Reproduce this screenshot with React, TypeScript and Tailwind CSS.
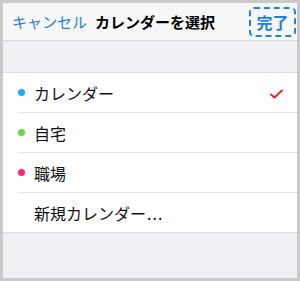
import React from "react";

type CalendarRow = {
  label: string;
  dot?: string;
  checked?: boolean;
};

const rows: CalendarRow[] = [
  { label: "カレンダー", dot: "bg-[#1badf8]", checked: true },
  { label: "自宅", dot: "bg-[#63da38]" },
  { label: "職場", dot: "bg-[#ff2968]" },
];

const font = { fontFamily: '"Noto Sans CJK JP", "Noto Sans", sans-serif' };

function Check() {
  return (
    <svg width="13" height="10" viewBox="0 0 13 10" className="mr-[14px] mt-[2px]">
      <path d="M1 5.5 L4.5 8.5 L12 1.5" fill="none" stroke="#ff1a1a" strokeWidth="1.8" strokeLinecap="round" strokeLinejoin="round" />
    </svg>
  );
}

export default function App() {
  return (
    <div className="w-[300px] h-[281px] bg-[#c9c9c9] pt-[3px] pl-[3px] pr-[3px] pb-[3px]" style={font}>
      <div className="flex h-full flex-col bg-[#efeff4]">
        <header className="flex h-[38px] items-center border-b border-[#d8d8d8] bg-[#f7f7f7] pl-[9px] pr-px">
          <span className="text-[15px] leading-none text-[#1a82f0]">キャンセル</span>
          <span className="ml-[8px] text-[15px] font-bold leading-none text-black">カレンダーを選択</span>
          <button className="ml-auto flex h-[30px] w-[47px] items-center justify-center rounded-[5px] border-2 border-dashed border-[#1a86e3] text-[16px] font-semibold leading-none text-[#1a7fe6]">
            完了
          </button>
        </header>
        <div className="h-[31px]" />
        <div className="border-y border-[#dedee2] bg-white">
          {rows.map((row) => (
            <div key={row.label} className="h-[40px] pl-[15px]">
              <div className="flex h-full items-center border-b border-[#e3e3e6]">
                <span className={`h-[7px] w-[7px] rounded-full ${row.dot}`} />
                <span className="ml-[9px] text-[16px] leading-none text-[#111]">{row.label}</span>
                {row.checked ? <span className="ml-auto flex"><Check /></span> : null}
              </div>
            </div>
          ))}
          <div className="flex h-[39px] items-center pl-[31px]">
            <span className="text-[16px] leading-none text-[#111]">
              新規カレンダー<span className="ml-px tracking-[1px]">...</span>
            </span>
          </div>
        </div>
      </div>
    </div>
  );
}
